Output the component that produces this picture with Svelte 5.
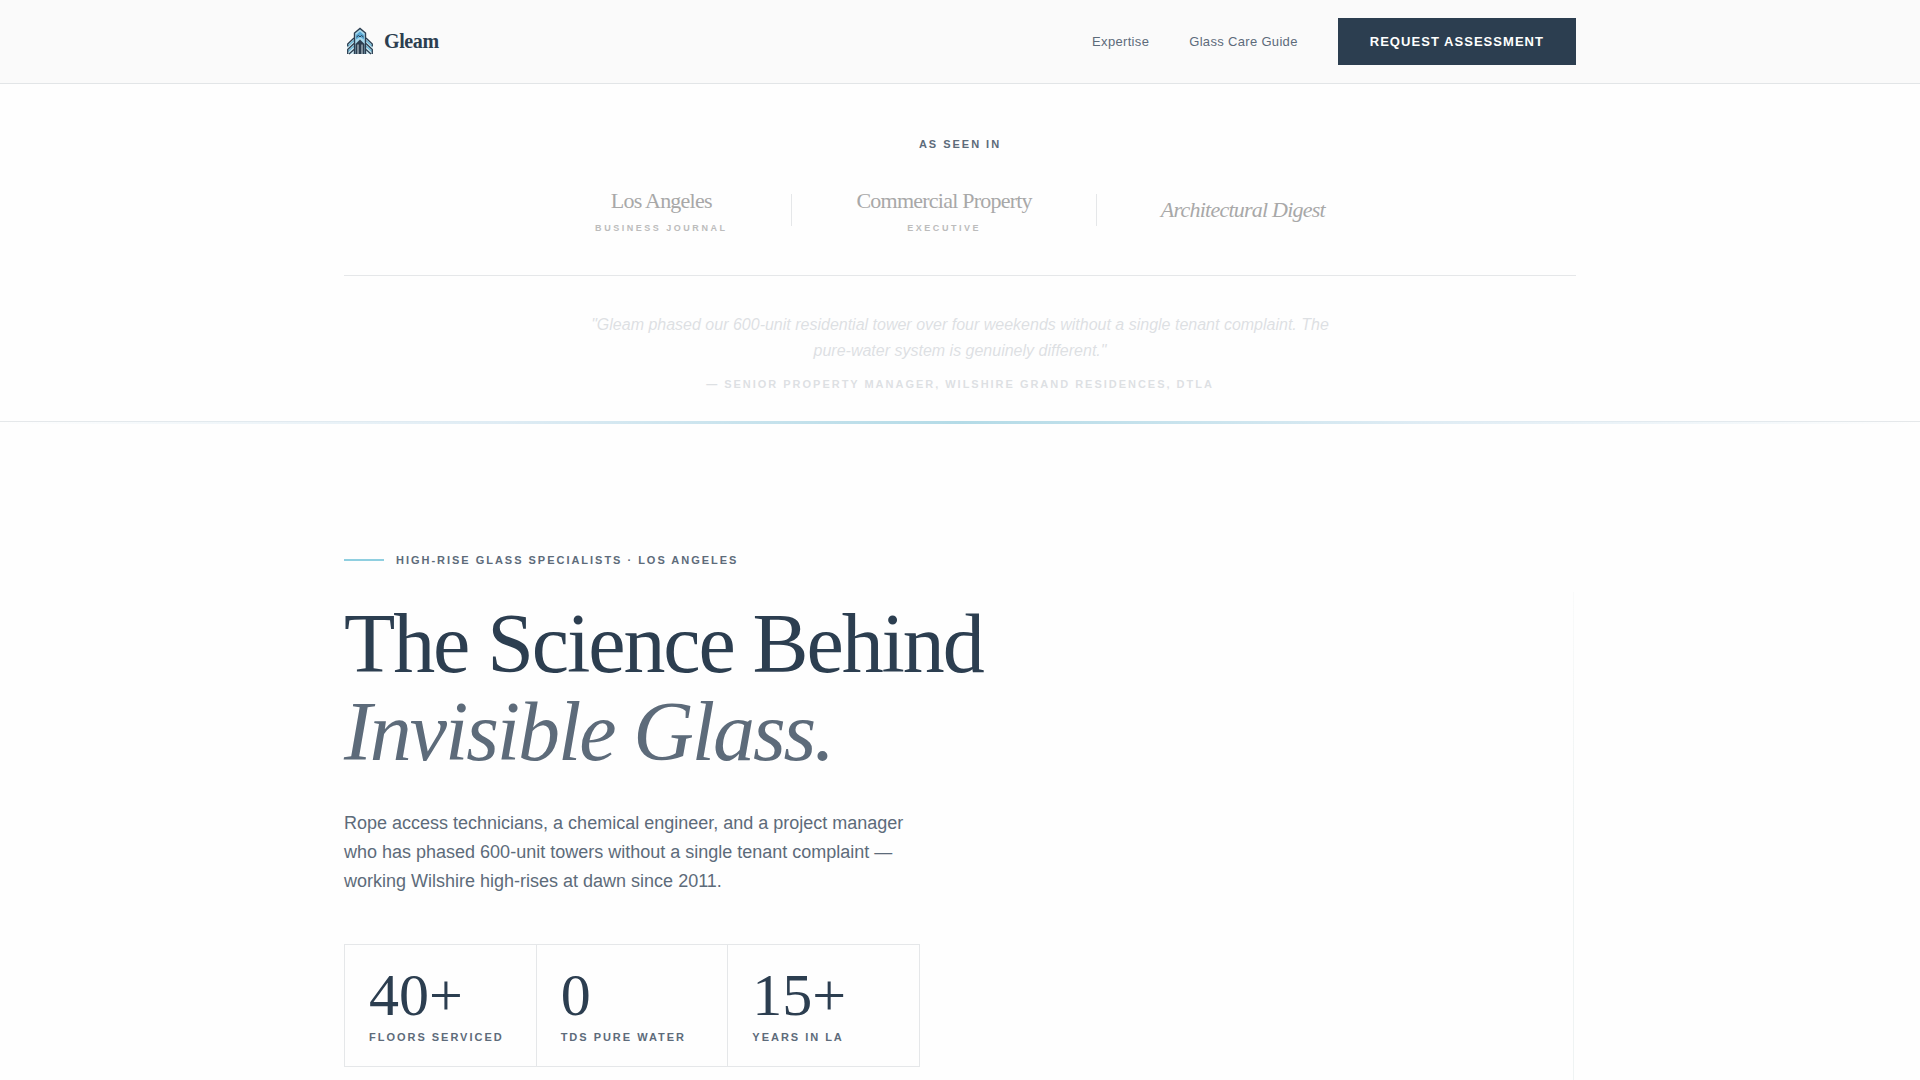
<script>
	const publications = [
		{ name: "Los Angeles", sub: "Business Journal" },
		{ name: "Commercial Property", sub: "Executive" },
		{ name: "Architectural Digest", italic: true }
	];
	const stats = [
		{ value: "40+", label: "Floors Serviced" },
		{ value: "0", label: "TDS Pure Water" },
		{ value: "15+", label: "Years in LA" }
	];
</script>

<header>
	<div class="container nav">
		<a class="brand" href="#top">
			<svg width="32" height="32" viewBox="0 0 32 32" fill="none" aria-hidden="true">
				<!-- wings -->
				<path d="M10 12 3 18V28h7zM22 12l7 6V28h-7z" fill="#d5ecf4" />
				<path d="m10 14.500-6 5.500M10 20l-6 5.500M22 14.500l6 5.500M22 20l6 5.500" stroke="#6fb9d8" stroke-width="1.600" />
				<path d="m10 12-6.300 6v2.500M10 17.500l-6.300 6V28M10 23.500 5 28M22 12l6.300 6v2.500M22 17.500l6.300 6V28M22 23.500l5 4.500" stroke="#2c3e50" stroke-width="1.300" />
				<!-- tower -->
				<path d="M10.500 28V7L16 2.500 21.500 7v21" fill="#a9d9ec" stroke="#2c3e50" stroke-width="1.400" />
				<path d="M12 9 16 5.500 20 9v4.500L16 11l-4 2.500z" fill="#5aa9d6" />
				<path d="m12.500 11 2-1.500L16 11l1.500-1.500 2 1.500" stroke="#2c3e50" />
				<path d="M11.500 28V18L16 13.500l4.500 4.500v10z" fill="#2c3e50" />
				<path d="M14 28V18.500M18 28V18.500" stroke="#e8f4f8" stroke-width=".9" />
			</svg>
			<span>Gleam</span>
		</a>
		<nav>
			<a href="#expertise">Expertise</a>
			<a href="#guide">Glass Care Guide</a>
			<a class="cta" href="#assessment">Request Assessment</a>
		</nav>
	</div>
</header>

<section class="press">
	<div class="container">
		<p class="label press-label">As Seen In</p>
		<div class="publications">
			{#each publications as pub, i}
				{#if i > 0}
					<span class="divider"></span>
				{/if}
				<div class="publication">
					<span class="pub-name" class:italic={pub.italic}>{pub.name}</span>
					{#if pub.sub}
						<span class="pub-sub">{pub.sub}</span>
					{/if}
				</div>
			{/each}
		</div>
		<figure>
			<blockquote>"Gleam phased our 600-unit residential tower over four weekends without a single tenant complaint. The pure-water system is genuinely different."</blockquote>
			<figcaption class="label">— Senior Property Manager, Wilshire Grand Residences, DTLA</figcaption>
		</figure>
	</div>
	<div class="glint"></div>
</section>

<main class="container hero">
	<div class="hero-copy">
		<p class="label eyebrow">High-Rise Glass Specialists · Los Angeles</p>
		<h1>The Science Behind<br /><em>Invisible Glass.</em></h1>
		<p class="lead">Rope access technicians, a chemical engineer, and a project manager who has phased 600-unit towers without a single tenant complaint — working Wilshire high-rises at dawn since 2011.</p>
		<dl class="stats">
			{#each stats as stat}
				<div class="stat">
					<dt class="label">{stat.label}</dt>
					<dd>{stat.value}</dd>
				</div>
			{/each}
		</dl>
	</div>
	<div class="rope"></div>
</main>

<style>
	:global(body) {
		margin: 0;
		background: #fefefe;
		color: #2c3e50;
		font-family: "Liberation Sans", Arial, sans-serif;
	}

	p, h1, dl, dd, figure, blockquote {
		margin: 0;
	}

	.container {
		box-sizing: border-box;
		max-width: 1280px;
		margin: 0 auto;
		padding: 0 24px;
	}

	.label {
		font-size: 11px;
		line-height: 16px;
		font-weight: 700;
		letter-spacing: 0.18em;
		text-transform: uppercase;
		color: #5d6b7a;
	}

	header {
		background: #fafafa;
		border-bottom: 1px solid #e2e5e7;
	}

	.nav {
		display: flex;
		align-items: center;
		justify-content: space-between;
		padding-top: 18px;
		padding-bottom: 18px;
	}

	.brand {
		display: flex;
		align-items: center;
		gap: 8px;
		color: #2c3e50;
		font: 700 20px "Liberation Serif", "Times New Roman", serif;
		letter-spacing: -0.02em;
		text-decoration: none;
	}

	nav {
		display: flex;
		align-items: center;
		gap: 40px;
	}

	nav a {
		color: #5d6b7a;
		font-size: 13px;
		letter-spacing: 0.025em;
		text-decoration: none;
	}

	nav .cta {
		padding: 16px 32px;
		background: #2c3e50;
		color: #fefefe;
		font-weight: 700;
		letter-spacing: 0.08em;
		text-transform: uppercase;
	}

	.press {
		padding-top: 52px;
	}

	.press-label {
		text-align: center;
	}

	.publications {
		display: flex;
		align-items: center;
		justify-content: center;
		gap: 64px;
		padding: 32px 0 40px;
		border-bottom: 1px solid #e5e7e9;
	}

	.publication {
		display: flex;
		flex-direction: column;
		align-items: center;
		gap: 3px;
		color: #a8a8a8;
	}

	.pub-name {
		font: 22px/34px "Liberation Serif", "Times New Roman", serif;
		letter-spacing: -0.035em;
	}

	.pub-name.italic {
		font-style: italic;
	}

	.pub-sub {
		color: #bcbcbc;
		font-size: 9px;
		line-height: 14px;
		font-weight: 700;
		letter-spacing: 0.28em;
		text-transform: uppercase;
	}

	.divider {
		width: 1px;
		height: 32px;
		background: #e5e7e9;
	}

	figure {
		max-width: 768px;
		margin: 0 auto;
		padding: 36px 0 29px;
		text-align: center;
		opacity: 0.2;
	}

	blockquote {
		margin-bottom: 12px;
		color: #5d6b7a;
		font-size: 16px;
		line-height: 26px;
		font-style: italic;
	}

	.glint {
		height: 3px;
		background:
			linear-gradient(90deg, transparent, #dfecf4 26%, #b4dbe7 50%, #dfecf4 74%, transparent),
			linear-gradient(#e5e8ea, #e5e8ea) top / 100% 1px no-repeat;
	}

	.hero {
		display: flex;
		justify-content: space-between;
	}

	.hero-copy {
		padding: 128px 0 96px;
	}

	.eyebrow {
		display: flex;
		align-items: center;
		gap: 12px;
	}

	.eyebrow::before {
		content: "";
		width: 40px;
		height: 2px;
		background: #8fcfe0;
	}

	h1 {
		margin: 32px 0 33px;
		font: 400 84px/88px "Liberation Serif", "Times New Roman", serif;
		letter-spacing: -0.025em;
	}

	h1 em {
		color: #5d6b7a;
	}

	.lead {
		max-width: 576px;
		margin-bottom: 48px;
		color: #5d6b7a;
		font-size: 18px;
		line-height: 29px;
	}

	.stats {
		display: grid;
		grid-template-columns: repeat(3, 1fr);
		gap: 1px;
		max-width: 574px;
		background: #e5e7e9;
		border: 1px solid #e5e7e9;
	}

	.stat {
		display: flex;
		flex-direction: column-reverse;
		gap: 4px;
		padding: 20px 24px 21px;
		background: #fefefe;
	}

	.stat dd {
		font: 60px/60px "Liberation Serif", "Times New Roman", serif;
	}

	.rope {
		width: 1px;
		margin: 168px 2px 0 0;
		background: linear-gradient(#f9fafa, #eff3f3 40%);
	}
</style>
